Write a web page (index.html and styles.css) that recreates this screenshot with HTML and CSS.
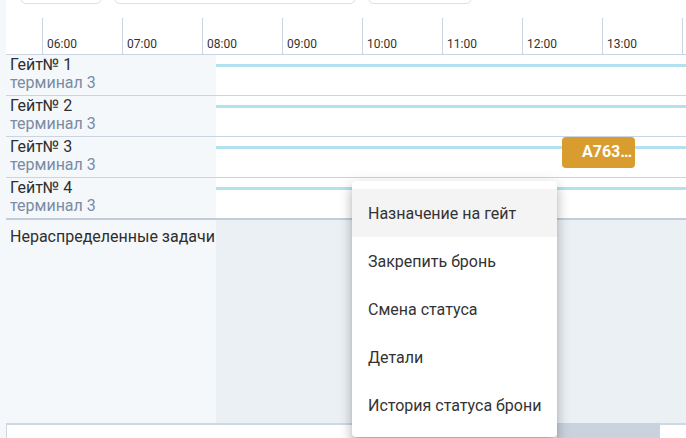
FILE: index.html
```html
<!DOCTYPE html>
<html>
    <head>
        <title>Расписание гейтов</title>
        <meta charset="UTF-8">
        <meta name="viewport" content="width=device-width, initial-scale=1.0">
        <link rel="stylesheet" href="styles.css">
    </head>
    <body>
        <div class="page">
            <!-- filters above, scrolled out of view -->
            <div class="toolbar">
                <span class="tool tool-date"></span>
                <span class="tool tool-search"></span>
                <span class="tool tool-select"></span>
            </div>

            <div class="hours">
                <div class="hours-pad"></div>
                <div class="hour">06:00</div>
                <div class="hour">07:00</div>
                <div class="hour">08:00</div>
                <div class="hour">09:00</div>
                <div class="hour">10:00</div>
                <div class="hour">11:00</div>
                <div class="hour">12:00</div>
                <div class="hour">13:00</div>
                <div class="hour"></div>
            </div>

            <div class="gates">
                <div class="gate">
                    <div class="gate-label">
                        <div class="gate-name">Гейт№ 1</div>
                        <div class="gate-term">терминал 3</div>
                    </div>
                    <div class="gate-track"><div class="track-line"></div></div>
                </div>
                <div class="gate">
                    <div class="gate-label">
                        <div class="gate-name">Гейт№ 2</div>
                        <div class="gate-term">терминал 3</div>
                    </div>
                    <div class="gate-track"><div class="track-line"></div></div>
                </div>
                <div class="gate">
                    <div class="gate-label">
                        <div class="gate-name">Гейт№ 3</div>
                        <div class="gate-term">терминал 3</div>
                    </div>
                    <div class="gate-track">
                        <div class="track-line"></div>
                        <div class="booking">A763…</div>
                    </div>
                </div>
                <div class="gate gate-last">
                    <div class="gate-label">
                        <div class="gate-name">Гейт№ 4</div>
                        <div class="gate-term">терминал 3</div>
                    </div>
                    <div class="gate-track"><div class="track-line"></div></div>
                </div>
            </div>

            <div class="unassigned">
                <div class="unassigned-label">Нераспределенные задачи</div>
                <div class="unassigned-area"></div>
            </div>

            <div class="bottom-box">
                <div class="scroll-thumb"></div>
            </div>
        </div>

        <div class="menu">
            <div class="menu-item active">Назначение на гейт</div>
            <div class="menu-item">Закрепить бронь</div>
            <div class="menu-item">Смена статуса</div>
            <div class="menu-item">Детали</div>
            <div class="menu-item">История статуса брони</div>
        </div>
    </body>
</html>
```

FILE: styles.css
```css
html, body {
    margin: 0;
    height: 100%;
    overflow: hidden;
}
body {
    background-color: #f5f8fb;
    font-family: Roboto, "Liberation Sans", sans-serif;
    color: #2e2e2e;
}
.page {
    margin-left: 6px;
    height: 100%;
    background: white;
    overflow: hidden;
}

/* toolbar bottoms */
.toolbar {
    display: flex;
    height: 4px;
    overflow: hidden;
    align-items: flex-end;
}
.tool {
    flex: none;
    height: 30px;
    border: 1px solid #dcdfe6;
    border-radius: 6px;
    box-sizing: border-box;
}
.tool-date {
    margin-left: 14px;
    width: 82px;
}
.tool-search {
    margin-left: 12px;
    width: 242px;
}
.tool-select {
    margin-left: 12px;
    width: 104px;
}

/* hours header */
.hours {
    display: flex;
    margin-top: 14px;
    height: 36px;
    border-bottom: 1px solid #cad5e1;
    box-sizing: border-box;
    height: 37px;
}
.hours-pad {
    flex: none;
    width: 36px;
}
.hour {
    flex: none;
    width: 80px;
    box-sizing: border-box;
    border-left: 1px solid #cad5e1;
    padding: 19px 0 0 4px;
    font-size: 12px;
    line-height: 14px;
    color: #333;
}

/* gates */
.gate {
    display: flex;
    height: 41px;
    box-sizing: border-box;
    border-bottom: 1px solid #cad5e1;
}
.gate-last {
    height: 42px;
    border-bottom: 2px solid #c3cdd9;
}
.gate-label {
    flex: none;
    width: 210px;
    box-sizing: border-box;
    padding: 1px 0 0 4px;
    background: #f5f8fb;
    font-size: 16px;
    line-height: 18px;
}
.gate-name {
    color: #2e2e2e;
}
.gate-term {
    color: #7a8ba3;
}
.gate-track {
    flex: 1;
    position: relative;
}
.track-line {
    margin-top: 9px;
    height: 3px;
    background: #b2e1ef;
}
.booking {
    position: absolute;
    left: 346px;
    top: 0;
    width: 73px;
    height: 31px;
    box-sizing: border-box;
    padding: 6px 0 0 20px;
    border-radius: 4px;
    background: #d89d2e;
    color: white;
    font-weight: bold;
    font-size: 16px;
    line-height: 18px;
    white-space: nowrap;
}

/* unassigned */
.unassigned {
    display: flex;
    height: 203px;
}
.unassigned-label {
    flex: none;
    width: 210px;
    box-sizing: border-box;
    padding: 8px 0 0 4px;
    background: #f5f8fb;
    font-size: 16px;
    line-height: 18px;
    white-space: nowrap;
}
.unassigned-area {
    flex: 1;
    background: #ebf0f5;
}

.bottom-box {
    display: flex;
    height: 40px;
    background: white;
    border-top: 2px solid #cfd9e4;
    border-left: 1px solid #cfd9e4;
}
.scroll-thumb {
    margin: -2px 26px 0 auto;
    width: 103px;
    background: #c9d3dd;
}

/* context menu */
.menu {
    position: absolute;
    left: 352px;
    top: 181px;
    width: 205px;
    padding: 8px 0;
    background: white;
    border-radius: 4px;
    box-shadow: 0 5px 5px -3px rgba(0,0,0,.2), 0 8px 10px 1px rgba(0,0,0,.14), 0 3px 14px 2px rgba(0,0,0,.12);
}
.menu-item {
    height: 48px;
    padding: 0 16px;
    display: flex;
    align-items: center;
    font-size: 16px;
    color: #333;
    white-space: nowrap;
}
.menu-item.active {
    background: #f4f4f4;
}
```
